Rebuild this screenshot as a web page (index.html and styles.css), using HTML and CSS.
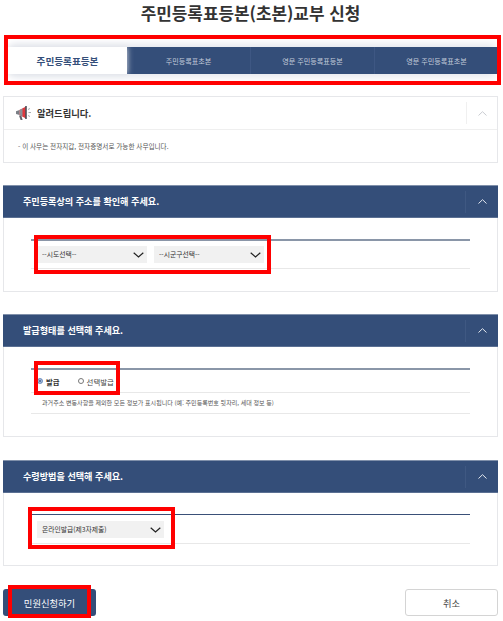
FILE: index.html
```html
<!DOCTYPE html>
<html lang="ko">
<head>
<meta charset="UTF-8">
<meta name="viewport" content="width=device-width,initial-scale=1">
<title>주민등록표등본(초본)교부 신청</title>
<link rel="stylesheet" href="styles.css">
</head>
<body>
<div class="page">
<h1 class="title">주민등록표등본(초본)교부 신청</h1>

<div class="tabs">
<a class="tab tab-on">주민등록표등본</a>
<a class="tab">주민등록표초본</a>
<a class="tab">영문 주민등록표등본</a>
<a class="tab">영문 주민등록표초본</a>
</div>

<div class="card notice">
<div class="notice-head">
<svg class="megaphone" width="18" height="16" viewBox="0 0 18 16">
<path d="M1 6.200 4.500 5v5L1 9z" fill="#7b7f86"/>
<path d="M4.500 5 11 1.500v12L4.500 10z" fill="#e0383e"/>
<path d="M4.500 5 7.500 3.400v8.200L4.500 10z" fill="#8b8f96"/>
<path d="M11 1v13" stroke="#4c5058" stroke-width="1.600"/>
<path d="M4 10.500 5.600 15h2L6.400 10.800z" fill="#5f636a"/>
<path d="M13 4.500 15 3.500M13.500 7.500h2.500M13 10.500l2 1" stroke="#a9adb3" stroke-width="1"/>
</svg>
<h2>알려드립니다.</h2>
<span class="fold">
<svg width="9" height="5" viewBox="0 0 9 5"><path d="M.5 4.500 4.500.7l4 3.800" fill="none" stroke="#c9ccd1"/></svg>
</span>
</div>
<p class="notice-text">- 이 사무는 전자지갑, 전자증명서로 가능한 사무입니다.</p>
</div>

<div class="card section sec-address">
<div class="sec-head">
<h2>주민등록상의 주소를 확인해 주세요.</h2>
<span class="fold">
<svg width="9" height="5" viewBox="0 0 9 5"><path d="M.5 4.500 4.500.7l4 3.800" fill="none" stroke="#e4e8ef"/></svg>
</span>
</div>
<div class="sec-body">
<div class="form-row">
<div class="select-wrap">
<select class="select"><option>--시도선택--</option></select>
<svg class="chev" width="11" height="6" viewBox="0 0 11 6"><path d="M.7.7l4.800 4.300L10.300.7" fill="none" stroke="#222" stroke-width="1.200"/></svg>
</div>
<div class="select-wrap">
<select class="select"><option>--시군구선택--</option></select>
<svg class="chev" width="11" height="6" viewBox="0 0 11 6"><path d="M.7.7l4.800 4.300L10.300.7" fill="none" stroke="#222" stroke-width="1.200"/></svg>
</div>
<span class="mark mark-address"></span>
</div>
</div>
</div>

<div class="card section sec-type">
<div class="sec-head">
<h2>발급형태를 선택해 주세요.</h2>
<span class="fold">
<svg width="9" height="5" viewBox="0 0 9 5"><path d="M.5 4.500 4.500.7l4 3.800" fill="none" stroke="#e4e8ef"/></svg>
</span>
</div>
<div class="sec-body">
<div class="form-row radio-row">
<label class="radio radio-on"><input type="radio" name="kind" checked>발급</label>
<label class="radio"><input type="radio" name="kind">선택발급</label>
<span class="mark mark-type"></span>
</div>
<p class="help">과거주소 변동사항을 제외한 모든 정보가 표시됩니다 (예: 주민등록번호 뒷자리, 세대 정보 등)</p>
</div>
</div>

<div class="card section sec-receive">
<div class="sec-head">
<h2>수령방법을 선택해 주세요.</h2>
<span class="fold">
<svg width="9" height="5" viewBox="0 0 9 5"><path d="M.5 4.500 4.500.7l4 3.800" fill="none" stroke="#e4e8ef"/></svg>
</span>
</div>
<div class="sec-body">
<div class="form-row">
<div class="select-wrap select-wide">
<select class="select"><option>온라인발급(제3자제출)</option></select>
<svg class="chev" width="11" height="6" viewBox="0 0 11 6"><path d="M.7.7l4.800 4.300L10.300.7" fill="none" stroke="#222" stroke-width="1.200"/></svg>
</div>
<span class="mark mark-receive"></span>
</div>
</div>
</div>

<div class="actions">
<button class="btn btn-main">민원신청하기<span class="mark mark-submit"></span></button>
<button class="btn btn-cancel">취소</button>
</div>
</div>
<span class="mark mark-tabs"></span>
</body>
</html>
```
FILE: styles.css
```css
*{margin:0;padding:0;box-sizing:border-box}
body{font-family:"Noto Sans CJK KR","Noto Sans",sans-serif;background:#fff;color:#333;position:relative;height:621px;overflow:hidden}
.page{padding:0 5px 0 3px}
.title{height:47px;padding-top:1px;font-size:16.900px;line-height:24px;font-weight:700;text-align:center;color:#333}
.tabs{display:flex;height:27px;margin-left:5px;background:#344e79;box-shadow:0 -6px 8px -3px #e4e6ec,0 6px 8px -3px #e4e6ec}
.tab{width:124px;display:flex;align-items:center;justify-content:center;font-size:7.100px;color:#c3cbd9;border-left:1px solid #3e5783}
.tab:nth-child(2){width:123px;border-left:none}
.tab-on{width:119px;border-left:none;background:#fff;color:#344e79;font-size:9.600px;font-weight:700;box-shadow:0 0 6px #dfe2e8}
.card{border:1px solid #e6e7ea;background:#fff}
.notice{margin-top:22px;height:67px}
.notice-head{height:33px;display:flex;align-items:center;padding-left:11px;border-bottom:1px solid #efefef}
.notice-head h2{font-size:9.300px;font-weight:700;color:#333;margin-left:4px;flex:1}
.megaphone{flex:none}
.fold{width:31px;height:22px;display:flex;align-items:center;justify-content:center;border-left:1px solid #f0f0f0}
.notice-text{padding:10px 0 0 14px;font-size:6.600px;line-height:12px;color:#555}
.section{margin-top:22px;border-color:#e6e7ea}
.sec-head{height:33px;margin:-1px -1px 0;display:flex;align-items:center;padding-left:20px;background:#344e79;border-top:1px solid #8090aa;border-bottom:1px solid #5b7093}
.sec-head h2{flex:1;font-size:9.100px;font-weight:700;color:#fff;margin-top:-2px}
.sec-head .fold{width:33px;border-left:1px solid #3f5882}
.sec-body{padding:21px 27px 0}
.sec-address{height:107px}
.sec-type{height:123px}
.sec-receive{height:106px;margin-top:23px}
.form-row{position:relative;height:30px;display:flex;align-items:center;gap:7px;padding-left:6px;border-top:2px solid #8a96a8;border-bottom:1px solid #e8e8e8}
.sec-receive .form-row{border-top:1px solid #3a5078}
.select-wrap{position:relative;width:110px;height:17px}
.select-wide{width:127px}
.select{display:block;appearance:none;width:100%;height:100%;border:none;background:#f1f1f1;border-radius:0;padding-left:5px;font:6.800px/17px "Noto Sans CJK KR",sans-serif;color:#333}
.chev{position:absolute;right:3px;top:6px}
.radio-row{height:25px;gap:18px;padding-left:6px}
.radio{display:flex;align-items:center;gap:3px;font-size:7.400px;color:#444}
.radio-on{font-weight:700;color:#333}
.radio input{appearance:none;width:6px;height:6px;border-radius:50%;border:1px solid #777;background:#fff}
.radio-on input{border-color:#7d9cc8;background:#3f5f94;box-shadow:inset 0 0 0 1px #b8cbe6}
.help{height:21px;padding-left:11px;font-size:6.050px;line-height:20px;color:#555;border-bottom:1px solid #e8e8e8}
.actions{display:flex;justify-content:space-between;margin-top:23px}
.btn{position:relative;width:93px;height:27px;border-radius:3px;font-family:"Noto Sans CJK KR",sans-serif;font-size:9.300px}
.btn-main{background:#344e79;border:none;color:#fff}
.btn-cancel{background:#fff;border:1px solid #d4d4d4;color:#444}
/* red annotation boxes drawn over the capture */
.mark{position:absolute;border:4px solid #f00;pointer-events:none}
.mark-tabs{left:4px;top:35px;width:497px;height:50px}
.mark-address{left:3px;top:-6px;width:237px;height:39px}
.mark-type{left:3px;top:-9px;width:86px;height:34px}
.mark-receive{left:-3px;top:-8px;width:147px;height:42px}
.mark-submit{left:5px;top:-4px;width:83px;height:33px}
```
